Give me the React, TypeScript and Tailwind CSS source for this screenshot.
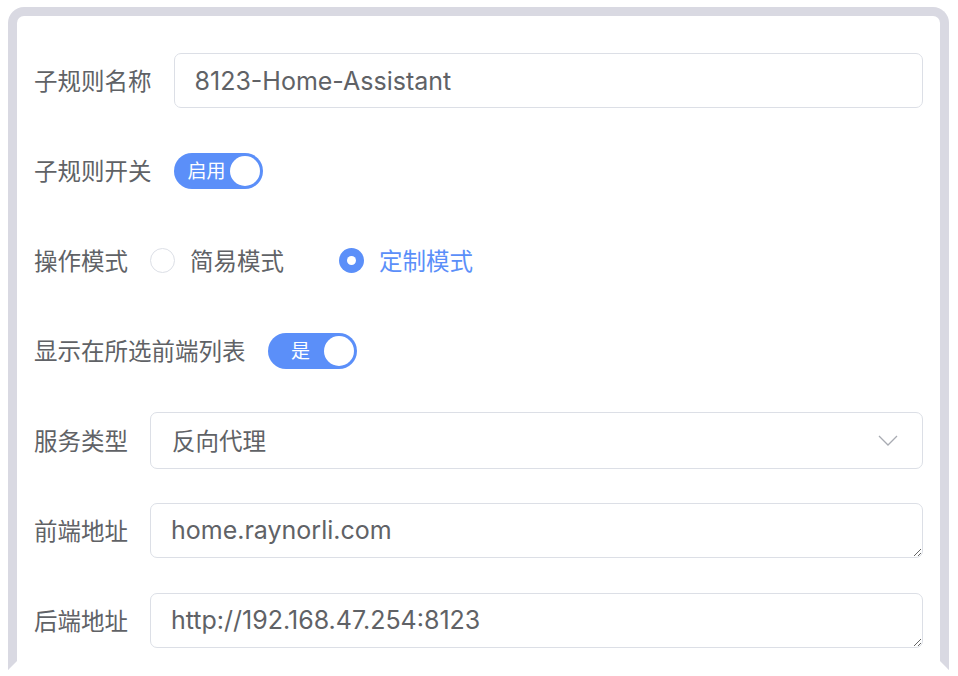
import React from 'react';

const labelCls = 'shrink-0 pt-[3px] text-[23.5px] text-[#606266] leading-none';
const fieldFont = { fontFamily: 'Inter, "Noto Sans CJK SC", sans-serif' };

function Switch({ text }: { text: string }) {
  return (
    <div className="flex h-[36px] w-[89px] items-center justify-between rounded-full bg-[#5b8ff9] pl-[10px] pr-[3px]">
      <span className="flex-1 pt-[2px] text-center text-[19px] leading-none text-white">{text}</span>
      <span className="h-[30px] w-[30px] rounded-full bg-white" />
    </div>
  );
}

function Radio({ checked, label }: { checked: boolean; label: string }) {
  return (
    <div className="flex items-center gap-[15px]">
      {checked ? (
        <span className="flex h-[25px] w-[25px] items-center justify-center rounded-full bg-[#5b8ff9]">
          <span className="h-[9px] w-[9px] rounded-full bg-white" />
        </span>
      ) : (
        <span className="h-[25px] w-[25px] rounded-full border border-[#dcdfe6] bg-white" />
      )}
      <span className={`pt-[3px] text-[23.5px] leading-none ${checked ? 'text-[#5b8ff9]' : 'text-[#606266]'}`}>{label}</span>
    </div>
  );
}

function Row({ label, children }: { label: string; children: React.ReactNode }) {
  return (
    <div className="flex h-[55px] items-center gap-[22px]">
      <span className={labelCls}>{label}</span>
      {children}
    </div>
  );
}

export default function App() {
  return (
    <div className="min-h-[676px] bg-white pl-[8px] pr-[9px] pt-[7px]" style={{ fontFamily: 'Inter, "Noto Sans CJK SC", sans-serif' }}>
      <div className="h-[663px] overflow-hidden rounded-t-[16px] border-[9px] border-[#d9d9e2] border-b-white bg-white">
        <div className="flex flex-col gap-[35px] px-[17px] pt-[37px]">
          <Row label="子规则名称">
            <input
              readOnly
              value="8123-Home-Assistant"
              style={fieldFont}
              className="h-[55px] flex-1 rounded-[7px] border border-[#dcdfe6] px-[20px] text-[25px] text-[#606266] outline-none"
            />
          </Row>
          <Row label="子规则开关">
            <Switch text="启用" />
          </Row>
          <Row label="操作模式">
            <div className="flex items-center gap-[55px]">
              <Radio checked={false} label="简易模式" />
              <Radio checked label="定制模式" />
            </div>
          </Row>
          <Row label="显示在所选前端列表">
            <Switch text="是" />
          </Row>
          <Row label="服务类型">
            <div className="flex h-[57px] flex-1 items-center justify-between rounded-[7px] border border-[#dcdfe6] pl-[21px] pr-[24px]">
              <span className="pt-[3px] text-[23.5px] leading-none text-[#606266]">反向代理</span>
              <svg width="20" height="11" viewBox="0 0 20 11" fill="none">
                <path d="M1 1l9 9 9-9" stroke="#a8abb2" strokeWidth="1.3" />
              </svg>
            </div>
          </Row>
          <Row label="前端地址">
            <textarea
              readOnly
              value="home.raynorli.com"
              rows={1}
              style={fieldFont}
              className="block h-[55px] flex-1 resize-y rounded-[7px] border border-[#dcdfe6] px-[20px] py-[10px] text-[25px] leading-[33px] text-[#606266] outline-none"
            />
          </Row>
          <Row label="后端地址">
            <textarea
              readOnly
              value="http://192.168.47.254:8123"
              rows={1}
              style={fieldFont}
              className="block h-[55px] flex-1 resize-y rounded-[7px] border border-[#dcdfe6] px-[20px] py-[10px] text-[25px] leading-[33px] text-[#606266] outline-none"
            />
          </Row>
        </div>
      </div>
    </div>
  );
}
